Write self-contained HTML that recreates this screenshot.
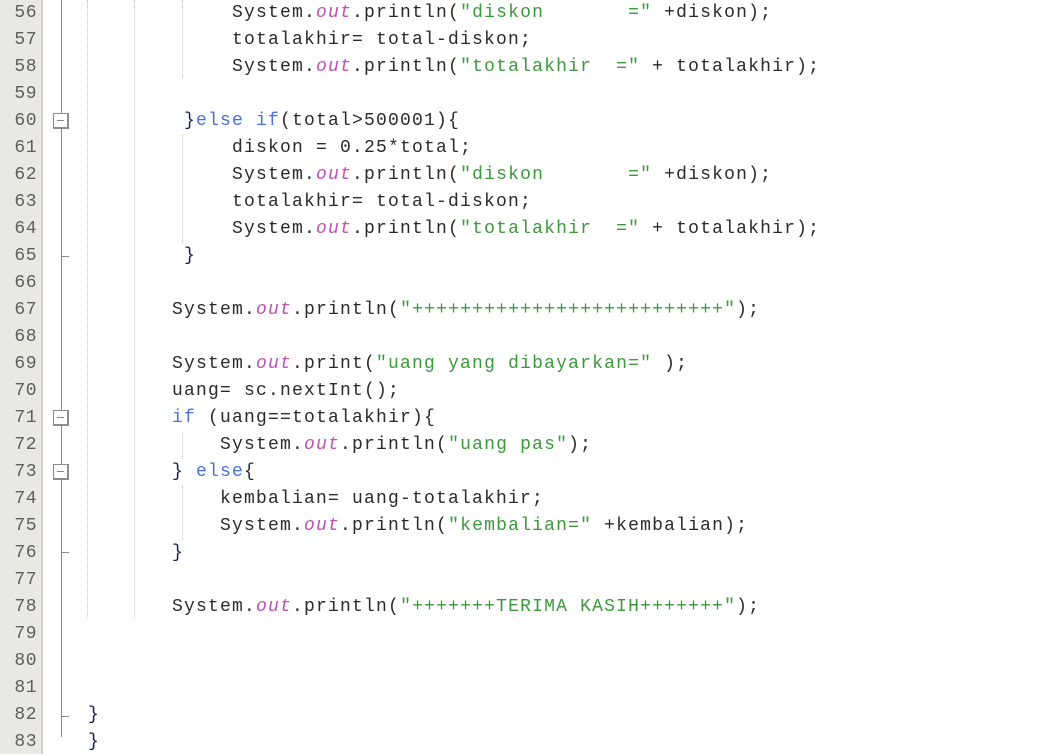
<!DOCTYPE html>
<html><head><meta charset="utf-8"><style>
body{margin:0;width:1044px;height:754px;background:#fff;overflow:hidden;position:relative;font-family:"Liberation Mono","Courier New",monospace;font-size:18px;letter-spacing:1.2px;}
.g{position:absolute;left:0;top:0;width:41px;height:754px;background:#e9e8e3;border-right:2px solid #cfcfca;}
.n{position:absolute;left:0;width:37px;text-align:right;color:#5e5e5e;line-height:27px;height:27px;font-size:18px;letter-spacing:0.5px;}
.l{position:absolute;line-height:27px;height:27px;white-space:pre;color:#2a2a2a;}
.k{color:#4a6fe0}.o{color:#c14fb4;font-style:italic}.s{color:#3a9a3a}.p{color:#1a1a5a}
.v{position:absolute;width:0;border-left:1px dotted #c4c4c4;}
.fl{position:absolute;left:61px;width:1px;background:#8c8c8c;}
.bx{position:absolute;left:53px;width:13px;height:13px;border:1px solid #8c8c8c;border-right-width:2px;border-bottom-width:2px;background:#fff;}
.bx:after{content:"";position:absolute;left:3px;top:6px;width:7px;height:1px;background:#888;}
.tk{position:absolute;left:61px;width:8px;height:1px;background:#8c8c8c;}
</style></head><body>
<div class="g"></div>
<div class="n" style="top:0">56</div><div class="n" style="top:27px">57</div><div class="n" style="top:54px">58</div><div class="n" style="top:81px">59</div><div class="n" style="top:108px">60</div><div class="n" style="top:135px">61</div><div class="n" style="top:162px">62</div><div class="n" style="top:189px">63</div><div class="n" style="top:216px">64</div><div class="n" style="top:243px">65</div><div class="n" style="top:270px">66</div><div class="n" style="top:297px">67</div><div class="n" style="top:324px">68</div><div class="n" style="top:351px">69</div><div class="n" style="top:378px">70</div><div class="n" style="top:405px">71</div><div class="n" style="top:432px">72</div><div class="n" style="top:459px">73</div><div class="n" style="top:486px">74</div><div class="n" style="top:513px">75</div><div class="n" style="top:540px">76</div><div class="n" style="top:567px">77</div><div class="n" style="top:594px">78</div><div class="n" style="top:621px">79</div><div class="n" style="top:648px">80</div><div class="n" style="top:675px">81</div><div class="n" style="top:702px">82</div><div class="n" style="top:729px">83</div>

<div class="fl" style="top:0;height:737px"></div>
<div class="bx" style="top:113px"></div>
<div class="bx" style="top:410px"></div>
<div class="bx" style="top:464px"></div>
<div class="tk" style="top:256px"></div>
<div class="tk" style="top:552px"></div>
<div class="tk" style="top:716px"></div>

<div class="v" style="left:87px;top:0;height:618px"></div>
<div class="v" style="left:134px;top:0;height:618px"></div>
<div class="v" style="left:182px;top:0;height:78px"></div>
<div class="v" style="left:182px;top:135px;height:108px"></div>
<div class="v" style="left:182px;top:432px;height:27px"></div>
<div class="v" style="left:182px;top:486px;height:54px"></div>

<div class="l" style="top:0;left:232px">System.<span class="o">out</span>.println(<span class="s">"diskon       ="</span> +diskon);</div>
<div class="l" style="top:27px;left:232px">totalakhir= total-diskon;</div>
<div class="l" style="top:54px;left:232px">System.<span class="o">out</span>.println(<span class="s">"totalakhir  ="</span> + totalakhir);</div>
<div class="l" style="top:108px;left:184px"><span class="p">}</span><span class="k">else if</span>(total&gt;500001){</div>
<div class="l" style="top:135px;left:232px">diskon = 0.25*total;</div>
<div class="l" style="top:162px;left:232px">System.<span class="o">out</span>.println(<span class="s">"diskon       ="</span> +diskon);</div>
<div class="l" style="top:189px;left:232px">totalakhir= total-diskon;</div>
<div class="l" style="top:216px;left:232px">System.<span class="o">out</span>.println(<span class="s">"totalakhir  ="</span> + totalakhir);</div>
<div class="l" style="top:243px;left:184px"><span class="p">}</span></div>
<div class="l" style="top:297px;left:172px">System.<span class="o">out</span>.println(<span class="s">"++++++++++++++++++++++++++"</span>);</div>
<div class="l" style="top:351px;left:172px">System.<span class="o">out</span>.print(<span class="s">"uang yang dibayarkan="</span> );</div>
<div class="l" style="top:378px;left:172px">uang= sc.nextInt();</div>
<div class="l" style="top:405px;left:172px"><span class="k">if</span> (uang==totalakhir){</div>
<div class="l" style="top:432px;left:220px">System.<span class="o">out</span>.println(<span class="s">"uang pas"</span>);</div>
<div class="l" style="top:459px;left:172px"><span class="p">}</span> <span class="k">else</span>{</div>
<div class="l" style="top:486px;left:220px">kembalian= uang-totalakhir;</div>
<div class="l" style="top:513px;left:220px">System.<span class="o">out</span>.println(<span class="s">"kembalian="</span> +kembalian);</div>
<div class="l" style="top:540px;left:172px"><span class="p">}</span></div>
<div class="l" style="top:594px;left:172px">System.<span class="o">out</span>.println(<span class="s">"+++++++TERIMA KASIH+++++++"</span>);</div>
<div class="l" style="top:702px;left:88px"><span class="p">}</span></div>
<div class="l" style="top:729px;left:88px"><span class="p">}</span></div>
</body></html>
